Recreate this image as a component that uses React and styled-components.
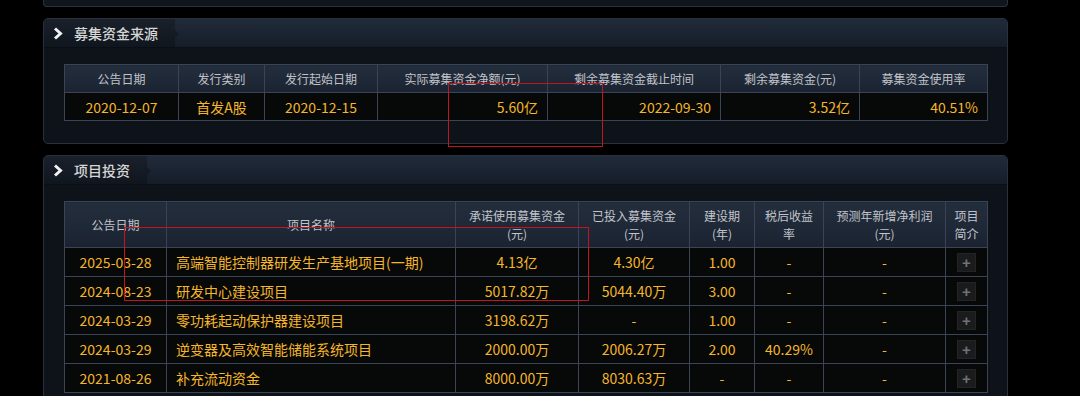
import React from "react";
import styled, { createGlobalStyle } from "styled-components";

const GlobalStyle = createGlobalStyle`
  html, body { margin: 0; padding: 0; background: #000; overflow: hidden; }
  body { font-family: "Noto Sans CJK SC", "Liberation Sans", sans-serif; }
  * { box-sizing: border-box; }
`;

const Page = styled.div`
  position: relative;
  width: 1080px;
  height: 396px;
  padding-left: 43px;
  display: flex;
  flex-direction: column;
`;

const Column = styled.div`
  width: 965px;
  display: flex;
  flex-direction: column;
  gap: 11px;
`;

const StubPanel = styled.div`
  height: 7px;
  background: #10161d;
  border: 1px solid #29323e;
  border-top: none;
  border-radius: 0 0 4px 4px;
`;

const Panel = styled.section`
  background: #0e131a;
  border: 1px solid #28313d;
  border-radius: 5px;
  overflow: hidden;
`;

const PanelHeader = styled.div`
  height: 29px;
  display: flex;
  background: linear-gradient(#202b3a, #151d29);
  border-bottom: 1px solid #0b0f15;
`;

const Tab = styled.div`
  position: relative;
  display: flex;
  align-items: center;
  gap: 11px;
  padding: 0 17px 0 9px;
  background: linear-gradient(#1a212b, #10161e);
  &::after {
    content: "";
    position: absolute;
    right: -4px;
    top: 11px;
    border-left: 4px solid #151b24;
    border-top: 4px solid transparent;
    border-bottom: 4px solid transparent;
  }
`;

const TabTitle = styled.span`
  font-size: 14px;
  font-weight: 500;
  color: #d6d6d6;
  line-height: 1;
`;

const PanelBody = styled.div`
  padding: 16px 20px 22px 20px;
`;

const Table = styled.table`
  width: 923px;
  border-collapse: collapse;
  table-layout: fixed;
  border: 1px solid #3a4456;
`;

const HeadCell = styled.th`
  height: ${(p) => p.$h || 28}px;
  padding: 0 3px;
  background: linear-gradient(#232e3d, #1b2331);
  border: 1px solid #3a4456;
  color: #c0c4ca;
  font-size: 12px;
  font-weight: normal;
  line-height: 18px;
  text-align: center;
  white-space: pre-line;
`;

const Cell = styled.td`
  height: ${(p) => p.$h || 28}px;
  padding: 0 9px;
  background: #070808;
  border: 1px solid #3a4456;
  color: #f5b62a;
  font-size: 14px;
  font-weight: 400;
  line-height: 1;
  text-align: ${(p) => p.$align || "center"};
  white-space: nowrap;
`;

const PlusButton = styled.span`
  display: inline-flex;
  align-items: center;
  justify-content: center;
  width: 19px;
  height: 19px;
  background: #1a1b1c;
  border: 1px solid #222426;
  color: #6f7275;
  font-family: "Liberation Sans", sans-serif;
  font-size: 15px;
  font-weight: bold;
  line-height: 1;
  vertical-align: middle;
`;

const Mark = styled.div`
  position: absolute;
  border: 1.5px solid #c2161f;
  pointer-events: none;
`;

const Chevron = () => (
  <svg width="10" height="13" viewBox="0 0 10 13">
    <polyline
      points="2,1.5 7.5,6.5 2,11.5"
      fill="none"
      stroke="#f2f2f2"
      strokeWidth="3"
      strokeLinejoin="miter"
    />
  </svg>
);

const sourceCols = [114, 86, 113, 170, 173, 139, 128];
const sourceHead = ["公告日期", "发行类别", "发行起始日期", "实际募集资金净额(元)", "剩余募集资金截止时间", "剩余募集资金(元)", "募集资金使用率"];
const sourceRow = [
  ["2020-12-07", "center"],
  ["首发A股", "center"],
  ["2020-12-15", "center"],
  ["5.60亿", "right"],
  ["2022-09-30", "right"],
  ["3.52亿", "right"],
  ["40.51%", "right"],
];

const projCols = [102, 289, 123, 111, 65, 69, 122, 42];
const projHead = [
  "公告日期",
  "项目名称",
  "承诺使用募集资金\n(元)",
  "已投入募集资金\n(元)",
  "建设期\n(年)",
  "税后收益\n率",
  "预测年新增净利润\n(元)",
  "项目\n简介",
];
const projRows = [
  ["2025-03-28", "高端智能控制器研发生产基地项目(一期)", "4.13亿", "4.30亿", "1.00", "-", "-"],
  ["2024-08-23", "研发中心建设项目", "5017.82万", "5044.40万", "3.00", "-", "-"],
  ["2024-03-29", "零功耗起动保护器建设项目", "3198.62万", "-", "1.00", "-", "-"],
  ["2024-03-29", "逆变器及高效智能储能系统项目", "2000.00万", "2006.27万", "2.00", "40.29%", "-"],
  ["2021-08-26", "补充流动资金", "8000.00万", "8030.63万", "-", "-", "-"],
];

const SectionHeader = ({ title }) => (
  <PanelHeader>
    <Tab>
      <Chevron />
      <TabTitle>{title}</TabTitle>
    </Tab>
  </PanelHeader>
);

export default function App() {
  return (
    <Page>
      <GlobalStyle />
      <Column>
        <StubPanel />
        <Panel>
          <SectionHeader title="募集资金来源" />
          <PanelBody>
            <Table>
              <colgroup>
                {sourceCols.map((w, i) => (
                  <col key={i} style={{ width: w }} />
                ))}
              </colgroup>
              <thead>
                <tr>
                  {sourceHead.map((h) => (
                    <HeadCell key={h}>{h}</HeadCell>
                  ))}
                </tr>
              </thead>
              <tbody>
                <tr>
                  {sourceRow.map(([v, a], i) => (
                    <Cell key={i} $align={a}>
                      {v}
                    </Cell>
                  ))}
                </tr>
              </tbody>
            </Table>
          </PanelBody>
        </Panel>
        <Panel>
          <SectionHeader title="项目投资" />
          <PanelBody>
            <Table>
              <colgroup>
                {projCols.map((w, i) => (
                  <col key={i} style={{ width: w }} />
                ))}
              </colgroup>
              <thead>
                <tr>
                  {projHead.map((h) => (
                    <HeadCell key={h} $h={46}>
                      {h}
                    </HeadCell>
                  ))}
                </tr>
              </thead>
              <tbody>
                {projRows.map((r, ri) => (
                  <tr key={ri}>
                    <Cell $h={29}>{r[0]}</Cell>
                    <Cell $h={29} $align="left">
                      {r[1]}
                    </Cell>
                    <Cell $h={29}>{r[2]}</Cell>
                    <Cell $h={29}>{r[3]}</Cell>
                    <Cell $h={29}>{r[4]}</Cell>
                    <Cell $h={29}>{r[5]}</Cell>
                    <Cell $h={29}>{r[6]}</Cell>
                    <Cell $h={29}>
                      <PlusButton>+</PlusButton>
                    </Cell>
                  </tr>
                ))}
              </tbody>
            </Table>
          </PanelBody>
        </Panel>
      </Column>
      <Mark style={{ left: 448, top: 83, width: 155, height: 64 }} />
      <Mark style={{ left: 124, top: 227, width: 465, height: 74 }} />
    </Page>
  );
}
